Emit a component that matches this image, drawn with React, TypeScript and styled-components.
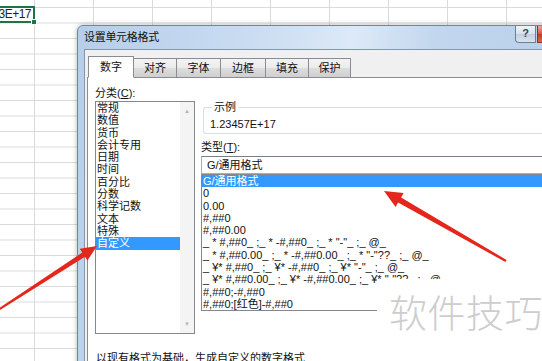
import styled, { createGlobalStyle } from "styled-components";

const GlobalStyle = createGlobalStyle`
  *, *::before, *::after {
    box-sizing: border-box;
  }
  html, body {
    margin: 0;
    padding: 0;
    background: #fff;
  }
  body {
    font-family: "Liberation Sans", "Noto Sans CJK SC", sans-serif;
    color: #000;
  }
`;

const Screen = styled.div`
  position: relative;
  width: 542px;
  height: 361px;
  overflow: hidden;
  background-color: #fff;
  background-image: linear-gradient(to right, #d8dadc 1px, transparent 1px),
    linear-gradient(to bottom, #d8dadc 1px, transparent 1px);
  background-size: 59px 15.5px;
  background-position: 34px 7px;
`;

const ActiveCell = styled.div`
  position: absolute;
  left: -30px;
  top: 6px;
  width: 65px;
  height: 17px;
  border: 2px solid #217346;
  background: #fff;
  font-size: 12px;
  letter-spacing: -0.5px;
  line-height: 13px;
  text-align: right;
  padding-right: 2px;
  color: #222;
  &::after {
    content: "";
    position: absolute;
    right: -4px;
    bottom: -4px;
    width: 6px;
    height: 6px;
    background: #217346;
    border: 1px solid #fff;
  }
`;

const Dialog = styled.div`
  position: absolute;
  left: 77px;
  top: 25px;
  width: 510px;
  height: 400px;
  border: 1px solid #6d86a3;
  border-radius: 6px 6px 0 0;
  background: linear-gradient(
    100deg,
    #b6cee9 0%,
    #c9dcf1 30%,
    #dde9f7 48%,
    #c2d7ee 62%,
    #bad1ea 80%,
    #c6daf0 100%
  );
  padding: 0 6px;
  display: flex;
  flex-direction: column;
  box-shadow: 0 0 5px rgba(0, 0, 0, 0.3);
`;

const TitleBar = styled.div`
  height: 23px;
  display: flex;
  align-items: flex-start;
`;

const Title = styled.div`
  font-size: 11px;
  line-height: 23px;
  color: #111;
  letter-spacing: -0.3px;
`;

const CaptionButtons = styled.div`
  margin-left: auto;
  display: flex;
  gap: 1px;
`;

const CaptionButton = styled.div<{ $close?: boolean }>`
  width: ${(p) => (p.$close ? 43 : 21)}px;
  height: 17px;
  border: 1px solid ${(p) => (p.$close ? "#8a3324" : "#6f7e90")};
  border-top: none;
  border-radius: ${(p) => (p.$close ? "0 0 4px 0" : "0 0 0 4px")};
  background: ${(p) =>
    p.$close
      ? "linear-gradient(#e9a99c, #d2553f 50%, #c23a22 51%, #d86a4f)"
      : "linear-gradient(#eef3f9, #d7e1ed 50%, #c3d0e0 51%, #d8e3ef)"};
  color: #3b4452;
  font-size: 11px;
  font-weight: bold;
  line-height: 15px;
  text-align: center;
`;

const Client = styled.div`
  flex: 1;
  background: #f0f0f0;
  border: 1px solid #8397ad;
  padding: 6px 0 0 2px;
  display: flex;
  flex-direction: column;
`;

const TabStrip = styled.div`
  display: flex;
  align-items: flex-end;
  height: 22px;
  padding-left: 1px;
  margin-bottom: -1px;
  position: relative;
  z-index: 1;
`;

const Tab = styled.div<{ $w: number; $active?: boolean }>`
  width: ${(p) => p.$w}px;
  height: ${(p) => (p.$active ? 22 : 20)}px;
  margin-right: -1px;
  border: 1px solid #898c95;
  border-bottom-color: ${(p) => (p.$active ? "#fff" : "#898c95")};
  background: ${(p) =>
    p.$active ? "#fff" : "linear-gradient(#f3f3f3, #ebebeb 50%, #dddddd 51%, #cfcfcf)"};
  font-size: 11px;
  line-height: ${(p) => (p.$active ? 20 : 18)}px;
  text-align: center;
  color: #111;
  position: relative;
  z-index: ${(p) => (p.$active ? 2 : 1)};
`;

const Panel = styled.div`
  flex: 1;
  background: #fff;
  border: 1px solid #898c95;
  padding: 9px 0 0 7px;
  display: flex;
  flex-direction: column;
`;

const Columns = styled.div`
  display: flex;
  gap: 6px;
  height: 247px;
`;

const LeftColumn = styled.div`
  width: 100px;
  display: flex;
  flex-direction: column;
`;

const RightColumn = styled.div`
  flex: 1;
  display: flex;
  flex-direction: column;
  padding-top: 14px;
`;

const Label = styled.div`
  font-size: 11px;
  line-height: 13px;
  color: #111;
`;

const CategoryList = styled.div`
  margin-top: 1px;
  height: 233px;
  border: 1px solid #828790;
  display: flex;
`;

const Items = styled.div`
  flex: 1;
  display: flex;
  flex-direction: column;
`;

const Item = styled.div<{ $selected?: boolean }>`
  height: 12.3px;
  line-height: 12.3px;
  font-size: 11px;
  padding-left: 1px;
  white-space: nowrap;
  color: ${(p) => (p.$selected ? "#fff" : "#111")};
  background: ${(p) => (p.$selected ? "#3399ff" : "transparent")};
`;

const ScrollTrack = styled.div`
  width: 14px;
  background: #f4f4f4;
  display: flex;
  flex-direction: column;
  justify-content: space-between;
  align-items: center;
  padding: 5px 0;
  color: #b4b4b4;
  font-size: 6px;
  line-height: 8px;
`;

const Sample = styled.fieldset`
  margin: 0 0 0 2px;
  padding: 4px 6px 2px;
  border: 1px solid #d5dfe5;
  border-radius: 3px;
  border-right: none;
  min-width: 0;
`;

const SampleLegend = styled.legend`
  font-size: 11px;
  line-height: 13px;
  padding: 0 2px;
  margin-left: 2px;
  color: #111;
`;

const SampleValue = styled.div`
  font-size: 11px;
  line-height: 13px;
  color: #111;
`;

const TypeLabel = styled(Label)`
  margin-top: 7px;
`;

const TypeInput = styled.div`
  margin-top: 2px;
  height: 18px;
  border: 1px solid #abadb3;
  border-top-color: #7a7e88;
  border-right: none;
  padding-left: 5px;
  font-size: 11px;
  line-height: 16px;
  color: #111;
`;

const TypeList = styled.div`
  border: 1px solid #828790;
  border-right: none;
  display: flex;
  flex-direction: column;
`;

const Note = styled.div`
  margin-top: 18px;
  padding-left: 1px;
  font-size: 11px;
  line-height: 13px;
  color: #111;
`;

const Watermark = styled.div`
  position: absolute;
  left: 377px;
  top: 279px;
  right: 0;
  bottom: 0;
  background: #fff;
  padding: 13px 0 0 12px;
  font-family: "Noto Sans CJK SC", sans-serif;
  font-weight: 300;
  font-size: 38px;
  line-height: 38px;
  letter-spacing: 0.5px;
  white-space: nowrap;
  color: #cdcdcd;
`;

const Overlay = styled.svg`
  position: absolute;
  left: 0;
  top: 0;
  pointer-events: none;
`;

const tabs = [
  { label: "数字", w: 46, active: true },
  { label: "对齐", w: 44 },
  { label: "字体", w: 45 },
  { label: "边框", w: 46 },
  { label: "填充", w: 44 },
  { label: "保护", w: 43 },
];

const categories = [
  "常规",
  "数值",
  "货币",
  "会计专用",
  "日期",
  "时间",
  "百分比",
  "分数",
  "科学记数",
  "文本",
  "特殊",
  "自定义",
];

const formats = [
  "G/通用格式",
  "0",
  "0.00",
  "#,##0",
  "#,##0.00",
  '_ * #,##0_ ;_ * -#,##0_ ;_ * "-"_ ;_ @_',
  '_ * #,##0.00_ ;_ * -#,##0.00_ ;_ * "-"??_ ;_ @_',
  '_ ¥* #,##0_ ;_ ¥* -#,##0_ ;_ ¥* "-"_ ;_ @_',
  '_ ¥* #,##0.00_ ;_ ¥* -#,##0.00_ ;_ ¥* "-"??_ ;_ @_',
  "#,##0;-#,##0",
  "#,##0;[红色]-#,##0",
];

export default function App() {
  return (
    <>
      <GlobalStyle />
      <Screen>
        <ActiveCell>1.23E+17</ActiveCell>
        <Dialog>
          <TitleBar>
            <Title>设置单元格格式</Title>
            <CaptionButtons>
              <CaptionButton>?</CaptionButton>
              <CaptionButton $close />
            </CaptionButtons>
          </TitleBar>
          <Client>
            <TabStrip>
              {tabs.map((t) => (
                <Tab key={t.label} $w={t.w} $active={t.active}>
                  {t.label}
                </Tab>
              ))}
            </TabStrip>
            <Panel>
              <Columns>
                <LeftColumn>
                  <Label>分类(<u>C</u>):</Label>
                  <CategoryList>
                    <Items>
                      {categories.map((c) => (
                        <Item key={c} $selected={c === "自定义"}>
                          {c}
                        </Item>
                      ))}
                    </Items>
                    <ScrollTrack>
                      <span>▲</span>
                      <span>▼</span>
                    </ScrollTrack>
                  </CategoryList>
                </LeftColumn>
                <RightColumn>
                  <Sample>
                    <SampleLegend>示例</SampleLegend>
                    <SampleValue>1.23457E+17</SampleValue>
                  </Sample>
                  <TypeLabel>类型(<u>T</u>):</TypeLabel>
                  <TypeInput>G/通用格式</TypeInput>
                  <TypeList>
                    {formats.map((f, i) => (
                      <Item key={f} $selected={i === 0}>
                        {f}
                      </Item>
                    ))}
                  </TypeList>
                </RightColumn>
              </Columns>
              <Note>以现有格式为基础，生成自定义的数字格式</Note>
            </Panel>
          </Client>
        </Dialog>
        <Watermark>软件技巧</Watermark>
        <Overlay width="542" height="361" viewBox="0 0 542 361">
          <polygon
            fill="#e4261c"
            points="-4.5,312.8 85,256.8 87.4,260.6 97,246 79.8,248.8 82.2,252.6 -5.5,311.2"
          />
          <polygon
            fill="#e4261c"
            points="384,191 395.6,206.9 398.1,202.6 505.4,262 506.6,260 401.1,197.4 403.6,193.1"
          />
        </Overlay>
      </Screen>
    </>
  );
}
